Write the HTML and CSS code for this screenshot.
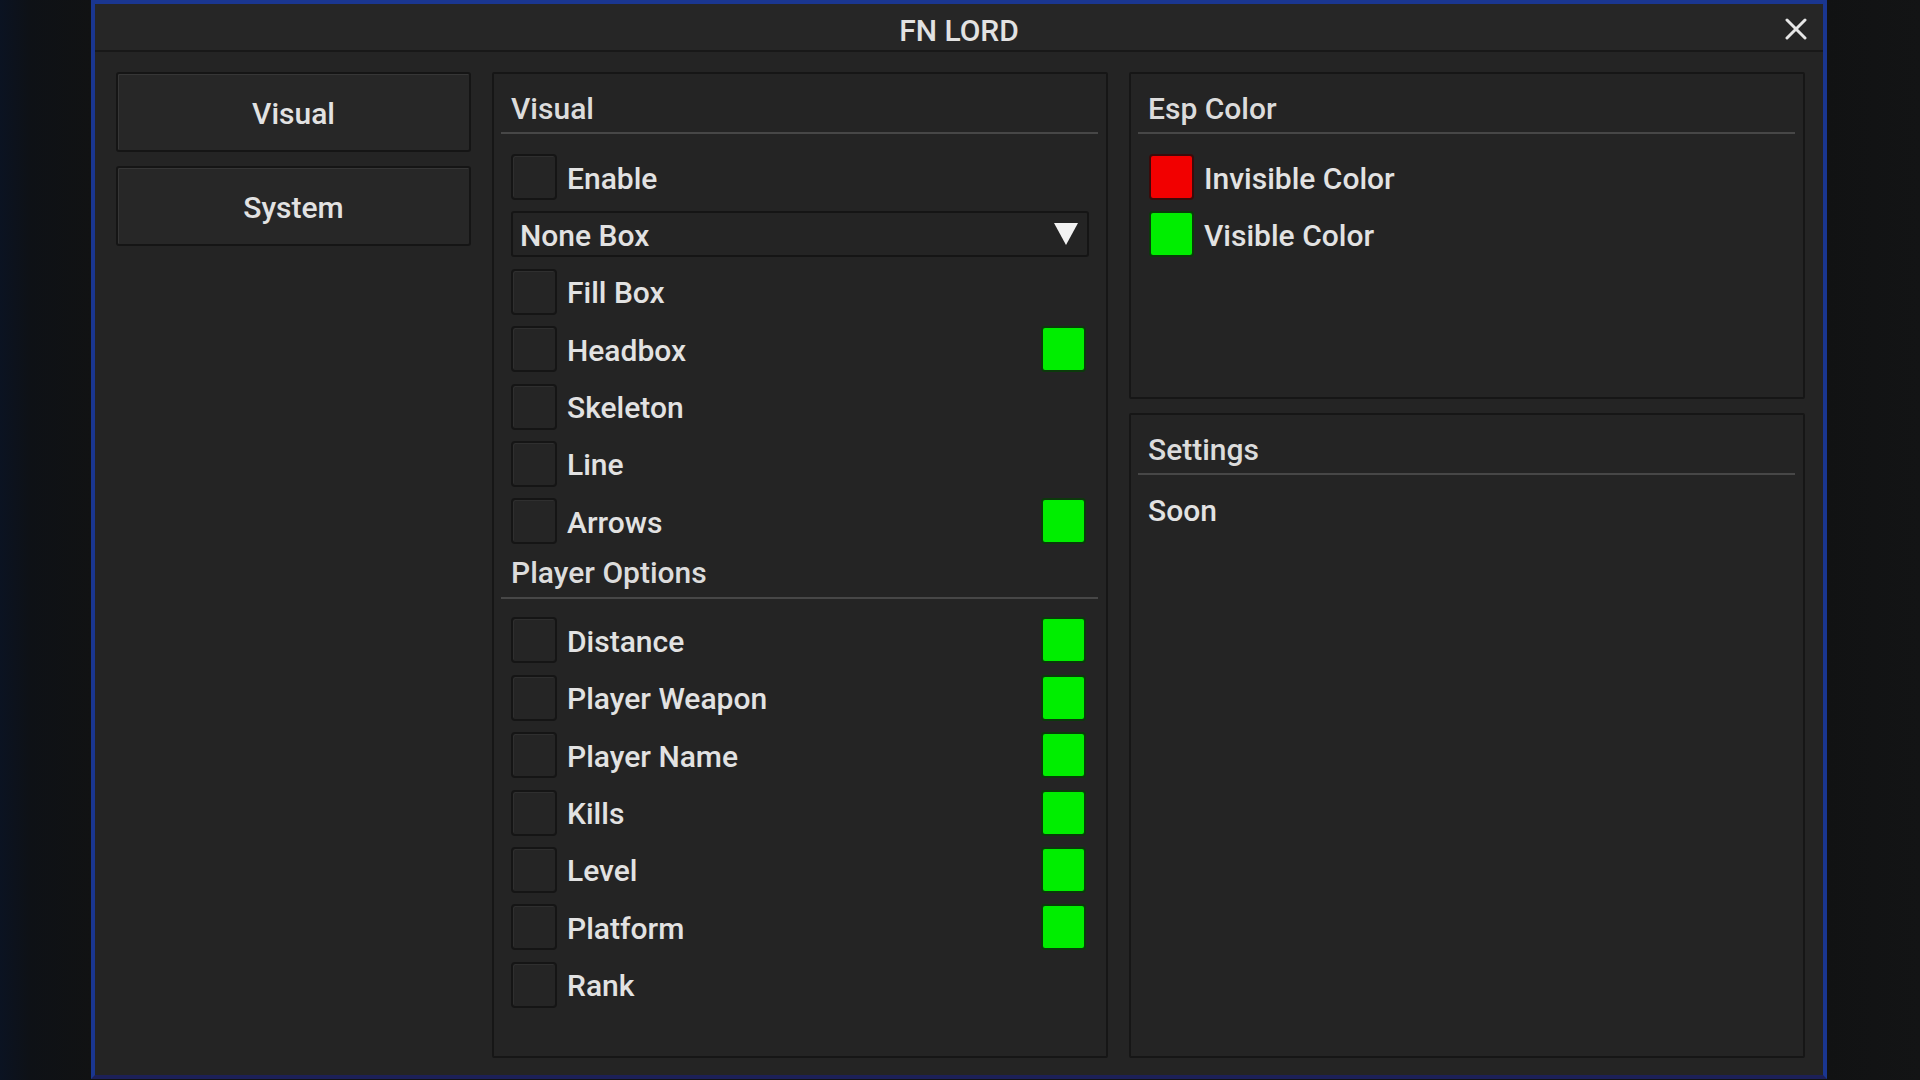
FILE: index.html
```html
<!DOCTYPE html>
<html lang="en">
<head>
<meta charset="UTF-8">
<meta name="viewport" content="width=device-width, initial-scale=1.0">
<title>FN LORD</title>
<link rel="stylesheet" href="styles.css">
</head>
<body>
<div class="window">
  <div class="titlebar">
    <span class="title">FN LORD</span>
    <svg class="close" width="22" height="22" viewBox="0 0 22 22">
      <path d="M2 2 L20 20 M20 2 L2 20" stroke="#e6e6e6" stroke-width="3" stroke-linecap="round" fill="none"/>
    </svg>
  </div>
  <div class="content">
    <div class="sidebar">
      <div class="tab">Visual</div>
      <div class="tab">System</div>
    </div>

    <div class="panel panel-visual">
      <div class="panel-title">Visual</div>
      <div class="sep"></div>
      <div class="rows">
        <div class="row"><span class="check"></span><span class="label">Enable</span></div>
        <div class="combo">
          <span>None Box</span>
          <svg width="24" height="22" viewBox="0 0 24 22"><polygon points="0,0 24,0 12,22" fill="#f2f2f2"/></svg>
        </div>
        <div class="row"><span class="check"></span><span class="label">Fill Box</span></div>
        <div class="row"><span class="check"></span><span class="label">Headbox</span><span class="swatch green"></span></div>
        <div class="row"><span class="check"></span><span class="label">Skeleton</span></div>
        <div class="row"><span class="check"></span><span class="label">Line</span></div>
        <div class="row"><span class="check"></span><span class="label">Arrows</span><span class="swatch green"></span></div>
      </div>
      <div class="panel-title sub">Player Options</div>
      <div class="sep sub-sep"></div>
      <div class="rows rows-sub">
        <div class="row"><span class="check"></span><span class="label">Distance</span><span class="swatch green"></span></div>
        <div class="row"><span class="check"></span><span class="label">Player Weapon</span><span class="swatch green"></span></div>
        <div class="row"><span class="check"></span><span class="label">Player Name</span><span class="swatch green"></span></div>
        <div class="row"><span class="check"></span><span class="label">Kills</span><span class="swatch green"></span></div>
        <div class="row"><span class="check"></span><span class="label">Level</span><span class="swatch green"></span></div>
        <div class="row"><span class="check"></span><span class="label">Platform</span><span class="swatch green"></span></div>
        <div class="row"><span class="check"></span><span class="label">Rank</span></div>
      </div>
    </div>

    <div class="right">
      <div class="panel panel-esp">
        <div class="panel-title">Esp Color</div>
        <div class="sep"></div>
        <div class="rows rows-color">
          <div class="row"><span class="swatch red lead"></span><span class="label">Invisible Color</span></div>
          <div class="row"><span class="swatch green lead"></span><span class="label">Visible Color</span></div>
        </div>
      </div>
      <div class="panel panel-settings">
        <div class="panel-title">Settings</div>
        <div class="sep"></div>
        <div class="soon">Soon</div>
      </div>
    </div>
  </div>
</div>
</body>
</html>
```

FILE: styles.css
```css
html, body {
    margin: 0;
    height: 100%;
}

body {
    font-family: Roboto, "Liberation Sans", sans-serif;
    font-size: 30px;
    font-weight: 500;
    color: #e2e2e2;
    background: linear-gradient(to right, #0b1322 0px, #0e1116 30px, #111213 91px, #111213 1827px, #131415 1920px);
    overflow: hidden;
}

.window {
    margin-left: 91px;
    width: 1736px;
    height: 1079px;
    box-sizing: border-box;
    border: 4px solid #1a3690;
    border-bottom-color: #1c2058;
    background: #242424;
    display: flex;
    flex-direction: column;
}

.titlebar {
    position: relative;
    height: 46px;
    border-bottom: 2px solid #181818;
    background: #262626;
    display: flex;
    align-items: center;
    justify-content: center;
    flex-shrink: 0;
}

.title {
    line-height: 46px;
    margin-top: 7px;
}

.close {
    position: absolute;
    right: 16px;
    top: 14px;
}

.content {
    flex: 1;
    display: flex;
    gap: 21px;
    padding: 20px 18px 17px 21px;
    min-height: 0;
}

.sidebar {
    width: 355px;
    display: flex;
    flex-direction: column;
    gap: 14px;
    flex-shrink: 0;
}

.tab {
    height: 80px;
    box-sizing: border-box;
    border: 2px solid #151515;
    border-radius: 3px;
    background: #272727;
    box-shadow: inset 1px 1px 0 #363636;
    display: flex;
    align-items: center;
    justify-content: center;
    padding-top: 3px;
}

.panel {
    box-sizing: border-box;
    border: 2px solid #161616;
    border-radius: 2px;
    background: #242424;
    padding: 15px 17px 0 17px;
}

.panel-visual {
    width: 616px;
    flex-shrink: 0;
}

.right {
    flex: 1;
    display: flex;
    flex-direction: column;
    gap: 14px;
}

.panel-esp {
    height: 327px;
    flex-shrink: 0;
}

.panel-settings {
    flex: 1;
}

.panel-title {
    line-height: 36px;
    padding-top: 2px;
    color: #dcdcdc;
}

.panel-title.sub {
    margin-top: 9px;
}

.sep {
    height: 2px;
    background: #474747;
    margin: 5px -9px 0 -10px;
}

.sub-sep {
    margin-top: 6px;
}

.rows {
    display: flex;
    flex-direction: column;
    gap: 11.4px;
    margin-top: 20px;
}

.rows-sub {
    margin-top: 18px;
}

.rows-color {
    margin-top: 20px;
    gap: 11px;
}

.row {
    height: 46px;
    display: flex;
    align-items: center;
}

.check {
    width: 46px;
    height: 46px;
    box-sizing: border-box;
    border: 2px solid #151515;
    border-radius: 4px;
    background: #252525;
    box-shadow: inset 1px 1px 0 #2f2f2f;
    flex-shrink: 0;
}

.label {
    margin-left: 10px;
    line-height: 36px;
    padding-top: 3px;
}

.swatch {
    width: 45px;
    height: 46px;
    box-sizing: border-box;
    border: 2px solid #0c1a0c;
    border-radius: 4px;
    margin-left: auto;
    margin-right: 3px;
    flex-shrink: 0;
}

.swatch.lead {
    margin-left: 1px;
    margin-right: 0;
}

.green {
    background: #00ee00;
    border-color: #0b3a0b;
}

.red {
    background: #f20000;
    border-color: #3a0b0b;
}

.combo {
    height: 46px;
    box-sizing: border-box;
    border: 2px solid #151515;
    border-radius: 3px;
    background: #242424;
    display: flex;
    align-items: center;
    justify-content: space-between;
    padding: 3px 9px 0 7px;
}

.combo svg {
    margin-top: -3px;
}

.soon {
    margin-top: 16px;
    line-height: 36px;
    padding-top: 2px;
}
```
